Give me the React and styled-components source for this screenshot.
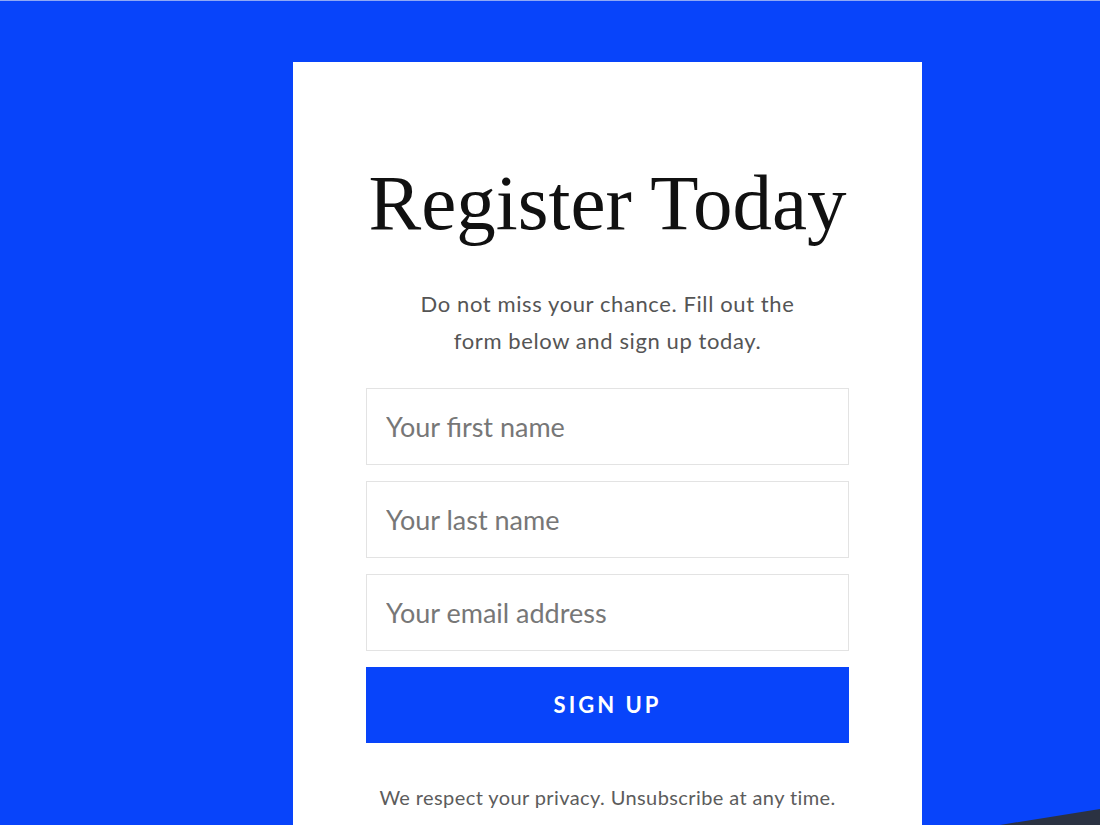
import React from 'react';
import styled, { createGlobalStyle } from 'styled-components';

const GlobalStyle = createGlobalStyle`
  html, body {
    margin: 0;
    padding: 0;
    background: #0844fa;
  }
  body {
    font-family: Lato, "Open Sans", sans-serif;
  }
`;

const Page = styled.div`
  position: relative;
  height: 825px;
  overflow: hidden;
  background: #0844fa;
  border-top: 1px solid #8fa8f5;
  box-sizing: border-box;
`;

const Corner = styled.svg`
  position: absolute;
  right: 0;
  bottom: 0;
  width: 100px;
  height: 20px;
`;

const Card = styled.div`
  position: relative;
  width: 629px;
  margin: 61px 0 0 293px;
  padding: 94px 73px 0;
  box-sizing: border-box;
  background: #fff;
  min-height: 800px;
  text-align: center;
`;

const Title = styled.h1`
  margin: 0 -30px;
  white-space: nowrap;
  font-family: "Liberation Serif", "Times New Roman", serif;
  font-weight: 400;
  font-size: 79px;
  line-height: 1.2;
  color: #111;
`;

const Lead = styled.p`
  margin: 34px auto 0;
  max-width: 400px;
  font-size: 22px;
  letter-spacing: 0.6px;
  line-height: 37px;
  color: #555;
`;

const Form = styled.form`
  display: flex;
  flex-direction: column;
  gap: 16px;
  margin-top: 29px;
`;

const Field = styled.input`
  height: 77px;
  padding: 0 19px;
  box-sizing: border-box;
  border: 1px solid #e3e3e3;
  font-family: Lato, sans-serif;
  font-size: 27px;
  color: #333;
  outline: none;

  &::placeholder {
    color: #777;
  }
`;

const Button = styled.button`
  height: 76px;
  border: none;
  background: #0844fa;
  color: #fff;
  font-family: Lato, sans-serif;
  font-weight: 700;
  font-size: 22px;
  letter-spacing: 3px;
  cursor: pointer;
`;

const Note = styled.p`
  margin: 42px 0 0;
  font-size: 20px;
  letter-spacing: 0.4px;
  color: #5c5c5c;
`;

export default function App() {
  return (
    <>
      <GlobalStyle />
      <Page>
        <Card>
          <Title>Register Today</Title>
          <Lead>Do not miss your chance. Fill out the form below and sign up today.</Lead>
          <Form onSubmit={e => e.preventDefault()}>
            <Field type="text" placeholder="Your first name" />
            <Field type="text" placeholder="Your last name" />
            <Field type="email" placeholder="Your email address" />
            <Button type="submit">SIGN UP</Button>
          </Form>
          <Note>We respect your privacy. Unsubscribe at any time.</Note>
        </Card>
        <Corner viewBox="0 0 100 20" preserveAspectRatio="none">
          <polygon points="0,20 100,4 100,20" fill="#2b3242" />
        </Corner>
      </Page>
    </>
  );
}
